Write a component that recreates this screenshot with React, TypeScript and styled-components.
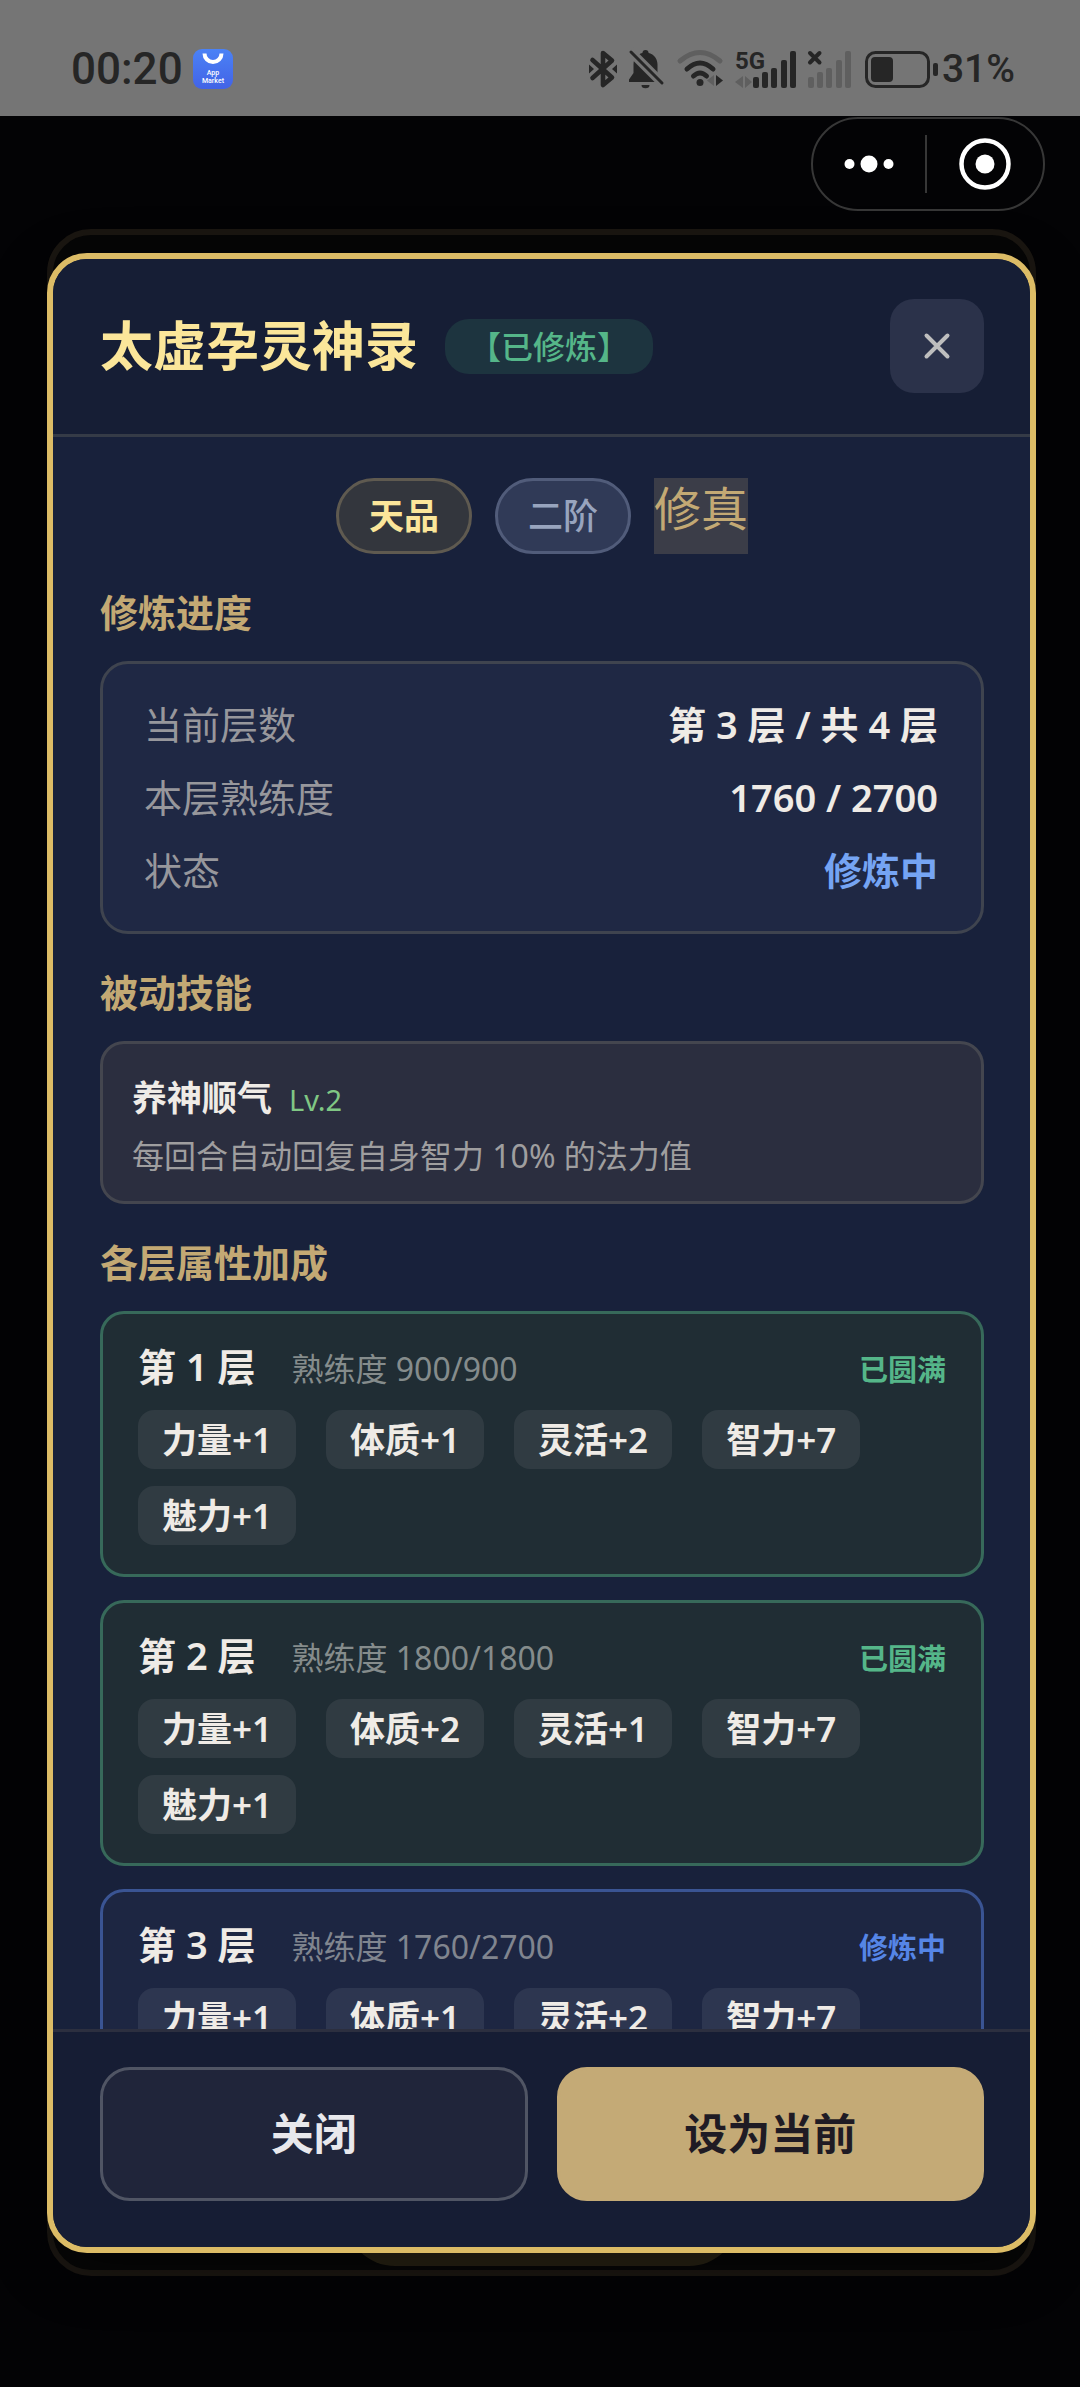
import React from "react";
import styled, { createGlobalStyle, css } from "styled-components";

const color = {
  ink: "#262626",
  inkFaded: "#5f5f5f",
  status: "#757575",
  gold: "#dcbc66",
  goldText: "#c3a974",
  goldLight: "#fbe69a",
  text: "#efebe6",
  muted: "#97979c",
  green: "#55b689",
  blue: "#75a4f3",
};

const GlobalStyle = createGlobalStyle`
  *, *::before, *::after { box-sizing: border-box; }
  body {
    margin: 0;
    background: #030305;
    color: ${color.text};
    font-family: "Noto Sans", "Noto Sans CJK SC", sans-serif;
  }
  h1, h2, h3, p, ul, dl, dd { margin: 0; padding: 0; }
  button { font: inherit; color: inherit; border: 0; padding: 0; background: none; cursor: pointer; }
`;

const Page = styled.div`
  display: flex;
  flex-direction: column;
  height: 100vh;
`;

/* ---------- system status bar ---------- */

const StatusBar = styled.header`
  display: flex;
  flex: none;
  align-items: center;
  justify-content: space-between;
  height: 116px;
  padding: 22px 65px 0 71px;
  background: ${color.status};
  color: ${color.ink};
  font-family: Roboto, sans-serif;
  font-weight: 500;
`;

const StatusGroup = styled.div<{ $gap: number }>`
  display: flex;
  align-items: center;
  gap: ${(p) => p.$gap}px;
`;

const Clock = styled.time`
  font-size: 44px;
  line-height: 52px;
`;

const BatteryGroup = styled(StatusGroup)`
  font-size: 39px;
  line-height: 52px;
`;

const Glyph = styled.svg`
  display: block;
  flex: none;
  overflow: visible;
`;

const AppMarketIcon = () => (
  <Glyph width="40" height="40" viewBox="0 0 40 40">
    <defs>
      <linearGradient id="market" x1="0" y1="0" x2="0" y2="1">
        <stop offset="0" stopColor="#4b82f6" />
        <stop offset="1" stopColor="#4263e6" />
      </linearGradient>
    </defs>
    <rect width="40" height="40" rx="9" fill="url(#market)" />
    <path d="M11.5 4.5a8.5 8.5 0 0 0 17 0" fill="none" stroke="#fff" strokeWidth="4" />
    <text x="20" y="26" fontSize="7" fill="#fff" textAnchor="middle">App</text>
    <text x="20" y="34" fontSize="7" fill="#fff" textAnchor="middle">Market</text>
  </Glyph>
);

const BluetoothIcon = () => (
  <Glyph width="28" height="38" viewBox="0 0 28 38">
    <path
      d="M3.5 10 23 27.5 14 35V3l9 7.5L3.5 28"
      fill="none"
      stroke={color.ink}
      strokeWidth="4.6"
      strokeLinejoin="round"
      strokeLinecap="round"
    />
    <path d="M0 14.5 5 19l-5 4.500zM28 14.5 23 19l5 4.500z" fill={color.ink} />
  </Glyph>
);

const BellOffIcon = () => (
  <Glyph width="35" height="38" viewBox="0 0 35 38">
    <circle cx="16.500" cy="3" r="3" fill={color.ink} />
    <path d="M16.500 2.500c7 0 12 5 12 12V23l4.500 6.500V32H0v-2.500L4.500 23v-8.500c0-7 5-12 12-12z" fill={color.ink} />
    <path d="M12.500 35h8a4 3.200 0 0 1-8 0z" fill={color.ink} />
    <path d="M1 1 35 35" stroke={color.status} strokeWidth="9" />
    <path d="M2 2 33 33" stroke={color.ink} strokeWidth="3" strokeLinecap="round" />
  </Glyph>
);

const WifiIcon = () => (
  <Glyph width="47" height="38" viewBox="-2 0 47 38">
    <g fill="none" strokeWidth="5" strokeLinecap="round">
      <path d="M2 11Q22-6 42 11" stroke={color.inkFaded} />
      <path d="M9 19q13-12 26 0" stroke={color.ink} />
      <path d="M15.500 26q6.500-6 13 0" stroke={color.ink} />
    </g>
    <circle cx="22" cy="32.500" r="3.500" fill={color.ink} />
    <path d="M36 25v11l-7-5.500z" fill={color.inkFaded} />
    <path d="M38 25v11l7-5.500z" fill={color.ink} />
  </Glyph>
);

const BARS: ReadonlyArray<readonly [number, number]> = [[0, 26], [9, 21], [18, 17], [28, 9], [37, 0]];

const SignalIcon = () => (
  <Glyph width="61" height="37" viewBox="0 0 61 37">
    <text x="0" y="18" fontSize="24" fontWeight="700" fill={color.ink}>5G</text>
    <path d="M8 25v12l-8-6zM10 25v12l7-6z" fill={color.inkFaded} />
    {BARS.map(([x, y]) => (
      <rect key={x} x={18 + x} y={y} width="6" height={37 - y} rx="2" fill={color.ink} />
    ))}
  </Glyph>
);

const NoSignalIcon = () => (
  <Glyph width="43" height="37" viewBox="0 0 43 37">
    <path d="m2 2 9.500 9.500m0-9.500L2 11.500" stroke={color.ink} strokeWidth="4" strokeLinecap="round" />
    {BARS.map(([x, y]) => (
      <rect key={x} x={x} y={y} width="6" height={37 - y} rx="2" fill={color.inkFaded} />
    ))}
  </Glyph>
);

const BatteryIcon = () => (
  <Glyph width="75" height="37" viewBox="-2 0 75 37">
    <rect x="1.500" y="1.500" width="62" height="34" rx="9" fill="none" stroke={color.ink} strokeWidth="3" />
    <rect x="6" y="6" width="22" height="25" rx="4" fill={color.ink} />
    <rect x="68" y="12" width="5" height="13" rx="2" fill={color.ink} />
  </Glyph>
);

/* ---------- mini-program capsule ---------- */

const CapsuleRow = styled.div`
  display: flex;
  flex: none;
  justify-content: flex-end;
  padding: 1px 35px 18px;
`;

const Capsule = styled.div`
  display: flex;
  align-items: center;
  height: 94px;
  border: 2px solid #373737;
  border-radius: 47px;
`;

const CapsuleButton = styled.button`
  display: flex;
  align-items: center;
  justify-content: center;
  width: 112px;
  height: 58px;

  & + & {
    width: 118px;
    border-left: 2px solid #373737;
  }
`;

/* ---------- dimmed page below and dialog above it ---------- */

const Stage = styled.main`
  display: grid;
  flex: 1;
  grid-template: minmax(0, 1fr) / minmax(0, 1fr);
  min-height: 0;
  padding: 0 44px 111px 47px;
`;

const DimmedPanel = styled.div`
  display: flex;
  grid-area: 1 / 1;
  align-items: flex-end;
  justify-content: center;
  padding-bottom: 4px;
  border: 6px solid #1a1611;
  border-radius: 44px;
  background: #060606;
`;

const DimmedButton = styled.div`
  width: 394px;
  height: 100px;
  border-radius: 50px;
  background: #241f12;
`;

const Dialog = styled.section`
  display: flex;
  grid-area: 1 / 1;
  flex-direction: column;
  margin: 24px 0 23px;
  overflow: hidden;
  border: 6px solid ${color.gold};
  border-radius: 40px;
  background: #18213b;
  box-shadow: 0 16px 60px rgba(0, 0, 0, 0.3);
`;

const DialogHeader = styled.header`
  display: flex;
  flex: none;
  align-items: center;
  padding: 40px 46px 41px 47px;
  border-bottom: 3px solid #353b47;
  background: #161e35;
`;

const Title = styled.h1`
  color: ${color.goldLight};
  font-size: 53px;
  font-weight: 700;
  line-height: 68px;
`;

const StateBadge = styled.span`
  margin-left: 27px;
  padding: 0 24px;
  border-radius: 24px;
  background: #1d343f;
  color: ${color.green};
  font-size: 32px;
  font-weight: 500;
  line-height: 55px;
`;

const IconButton = styled.button`
  display: flex;
  align-items: center;
  justify-content: center;
  width: 94px;
  height: 94px;
  margin-left: auto;
  border-radius: 24px;
  background: #2b324a;
`;

const DialogBody = styled.div`
  flex: 1;
  min-height: 0;
  padding: 41px 46px 41px 47px;
  overflow-y: auto;
  scrollbar-width: none;
`;

const Tags = styled.div`
  display: flex;
  justify-content: center;
  gap: 23px;
`;

const Tag = styled.span<{ $tone: "gold" | "slate" }>`
  padding: 0 30px;
  border: 3px solid;
  border-radius: 38px;
  font-size: 35px;
  line-height: 70px;
  ${(p) =>
    p.$tone === "gold"
      ? css`
          border-color: #5f5a50;
          background: #33363d;
          color: ${color.goldLight};
          font-weight: 600;
        `
      : css`
          border-color: #515c7a;
          background: #303a57;
          color: #98a4be;
          font-weight: 500;
        `}
`;

const PlainTag = styled.span`
  background: #3b3d48;
  color: ${color.goldText};
  font-size: 47px;
  line-height: 60px;
`;

const SectionTitle = styled.h2`
  margin: 30px 0 20px;
  color: ${color.goldText};
  font-size: 38px;
  font-weight: 600;
  line-height: 57px;
`;

const ProgressCard = styled.dl`
  display: flex;
  flex-direction: column;
  gap: 16px;
  padding: 32px 43px 32px 41px;
  border: 3px solid #3f444f;
  border-radius: 28px;
  background: #1f2844;
`;

const ProgressRow = styled.div`
  display: flex;
  justify-content: space-between;
  color: ${color.muted};
  font-size: 38px;
  line-height: 57px;
`;

const ProgressValue = styled.dd<{ $active?: boolean }>`
  color: ${(p) => (p.$active ? color.blue : color.text)};
  font-weight: 600;
`;

const SkillCard = styled.div`
  padding: 27px 29px 21px;
  border: 3px solid #44464f;
  border-radius: 24px;
  background: #2b2e3f;
`;

const SkillHead = styled.div`
  display: flex;
  align-items: baseline;
  gap: 17px;
  margin-bottom: 8px;
`;

const SkillName = styled.h3`
  font-size: 35px;
  font-weight: 600;
  line-height: 53px;
`;

const SkillLevel = styled.span`
  color: #80c784;
  font-size: 29px;
  line-height: 44px;
`;

const SkillText = styled.p`
  color: #9f9e9f;
  font-size: 32px;
  line-height: 48px;
`;

const Levels = styled.div`
  display: flex;
  flex-direction: column;
  gap: 23px;
`;

const LevelCard = styled.article<{ $done: boolean }>`
  padding: 24px 35px 29px;
  border: 3px solid ${(p) => (p.$done ? "#37695a" : "#3a5493")};
  border-radius: 24px;
  background: ${(p) => (p.$done ? "#202d34" : "#1d2642")};
`;

const LevelHead = styled.div`
  display: flex;
  align-items: baseline;
  margin-bottom: 15px;
`;

const LevelName = styled.h3`
  margin-right: 36px;
  font-size: 38px;
  font-weight: 600;
  line-height: 57px;
`;

const LevelSkill = styled.span<{ $done: boolean }>`
  color: ${(p) => (p.$done ? "#858c8c" : "#80858f")};
  font-size: 32px;
  line-height: 48px;
`;

const LevelState = styled.span<{ $done: boolean }>`
  margin-left: auto;
  color: ${(p) => (p.$done ? color.green : "#5585e6")};
  font-size: 29px;
  font-weight: 600;
  line-height: 44px;
`;

const Bonuses = styled.ul`
  display: flex;
  flex-wrap: wrap;
  gap: 17px 30px;
  list-style: none;
`;

const Bonus = styled.li<{ $done: boolean }>`
  padding: 0 24px;
  border-radius: 16px;
  background: ${(p) => (p.$done ? "#303b42" : "#2d3650")};
  font-size: 35px;
  font-weight: 600;
  line-height: 59px;
`;

const DialogFooter = styled.footer`
  display: flex;
  flex: none;
  gap: 29px;
  padding: 35px 46px 46px 47px;
  border-top: 3px solid #2c2f3f;
  background: #161d34;
`;

const ActionButton = styled.button<{ $primary?: boolean }>`
  flex: 1;
  height: 134px;
  border: 3px solid;
  border-radius: 30px;
  font-size: 43px;
  font-weight: 600;
  line-height: 64px;
  ${(p) =>
    p.$primary
      ? css`
          border-color: #c4aa76;
          background: #c4aa76;
          color: #1f1b24;
        `
      : css`
          border-color: #505564;
          background: #20253a;
          color: #e8e8ec;
        `}
`;

type Level = {
  name: string;
  skill: string;
  state: string;
  done: boolean;
  bonuses: string[];
};

const levels: Level[] = [
  {
    name: "第 1 层",
    skill: "熟练度 900/900",
    state: "已圆满",
    done: true,
    bonuses: ["力量+1", "体质+1", "灵活+2", "智力+7", "魅力+1"],
  },
  {
    name: "第 2 层",
    skill: "熟练度 1800/1800",
    state: "已圆满",
    done: true,
    bonuses: ["力量+1", "体质+2", "灵活+1", "智力+7", "魅力+1"],
  },
  {
    name: "第 3 层",
    skill: "熟练度 1760/2700",
    state: "修炼中",
    done: false,
    bonuses: ["力量+1", "体质+1", "灵活+2", "智力+7"],
  },
];

export default function App() {
  return (
    <Page>
      <GlobalStyle />
      <StatusBar>
        <StatusGroup $gap={10}>
          <Clock>00:20</Clock>
          <AppMarketIcon />
        </StatusGroup>
        <StatusGroup $gap={12}>
          <BluetoothIcon />
          <BellOffIcon />
          <WifiIcon />
          <SignalIcon />
          <NoSignalIcon />
          <BatteryGroup $gap={4}>
            <BatteryIcon />
            <span>31%</span>
          </BatteryGroup>
        </StatusGroup>
      </StatusBar>

      <CapsuleRow>
        <Capsule>
          <CapsuleButton aria-label="更多">
            <Glyph width="50" height="18" viewBox="0 0 50 18" fill="#fff">
              <circle cx="5.500" cy="9" r="5" />
              <circle cx="25" cy="9" r="8.500" />
              <circle cx="44.500" cy="9" r="5" />
            </Glyph>
          </CapsuleButton>
          <CapsuleButton aria-label="退出">
            <Glyph width="52" height="52" viewBox="0 0 52 52">
              <circle cx="26" cy="26" r="23.500" fill="none" stroke="#fff" strokeWidth="4.500" />
              <circle cx="26" cy="26" r="9.500" fill="#fff" />
            </Glyph>
          </CapsuleButton>
        </Capsule>
      </CapsuleRow>

      <Stage>
        <DimmedPanel aria-hidden="true">
          <DimmedButton />
        </DimmedPanel>

        <Dialog role="dialog" aria-labelledby="dialog-title">
          <DialogHeader>
            <Title id="dialog-title">太虚孕灵神录</Title>
            <StateBadge>【已修炼】</StateBadge>
            <IconButton aria-label="关闭弹窗">
              <Glyph width="26" height="26" viewBox="0 0 26 26">
                <path d="m2.500 2.500 21 21m0-21-21 21" stroke="#bebebe" strokeWidth="4" strokeLinecap="round" />
              </Glyph>
            </IconButton>
          </DialogHeader>

          <DialogBody>
            <Tags>
              <Tag $tone="gold">天品</Tag>
              <Tag $tone="slate">二阶</Tag>
              <PlainTag>修真</PlainTag>
            </Tags>

            <SectionTitle>修炼进度</SectionTitle>
            <ProgressCard>
              <ProgressRow>
                <dt>当前层数</dt>
                <ProgressValue>第 3 层 / 共 4 层</ProgressValue>
              </ProgressRow>
              <ProgressRow>
                <dt>本层熟练度</dt>
                <ProgressValue>1760 / 2700</ProgressValue>
              </ProgressRow>
              <ProgressRow>
                <dt>状态</dt>
                <ProgressValue $active>修炼中</ProgressValue>
              </ProgressRow>
            </ProgressCard>

            <SectionTitle>被动技能</SectionTitle>
            <SkillCard>
              <SkillHead>
                <SkillName>养神顺气</SkillName>
                <SkillLevel>Lv.2</SkillLevel>
              </SkillHead>
              <SkillText>每回合自动回复自身智力 10% 的法力值</SkillText>
            </SkillCard>

            <SectionTitle>各层属性加成</SectionTitle>
            <Levels>
              {levels.map((level) => (
                <LevelCard key={level.name} $done={level.done}>
                  <LevelHead>
                    <LevelName>{level.name}</LevelName>
                    <LevelSkill $done={level.done}>{level.skill}</LevelSkill>
                    <LevelState $done={level.done}>{level.state}</LevelState>
                  </LevelHead>
                  <Bonuses>
                    {level.bonuses.map((bonus) => (
                      <Bonus key={bonus} $done={level.done}>{bonus}</Bonus>
                    ))}
                  </Bonuses>
                </LevelCard>
              ))}
            </Levels>
          </DialogBody>

          <DialogFooter>
            <ActionButton>关闭</ActionButton>
            <ActionButton $primary>设为当前</ActionButton>
          </DialogFooter>
        </Dialog>
      </Stage>
    </Page>
  );
}
